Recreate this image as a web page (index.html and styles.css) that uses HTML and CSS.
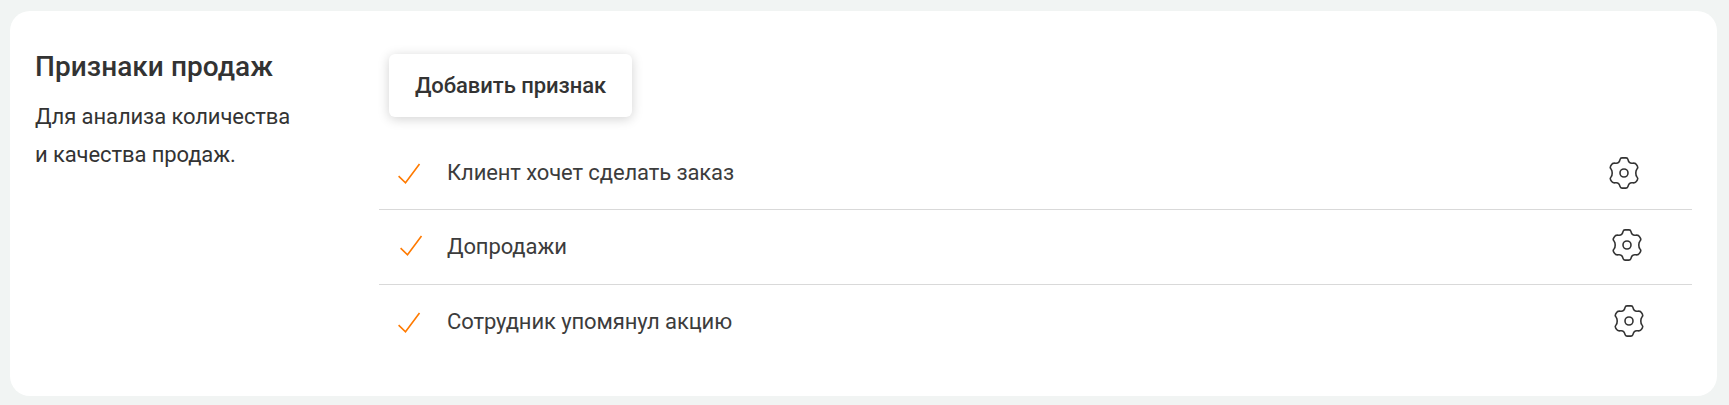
FILE: index.html
```
<!DOCTYPE html>
<html lang="ru">
<head>
    <meta charset="UTF-8">
    <title>Признаки продаж</title>
    <link rel="stylesheet" href="styles.css">
</head>
<body>
    <svg width="0" height="0" class="sprite">
        <symbol id="icon-check" viewBox="0 0 24 24">
            <path d="M1.6 14.2 L8.5 20.8 L22.5 2" />
        </symbol>
        <symbol id="icon-gear" viewBox="-17 -17 34 34">
            <path d="M-2 -15.1 H2 Q3.6 -15.1 4 -13.4 C4.6 -10.8 6 -9.4 8.6 -9.8 Q11.4 -10.4 12.6 -8.2 L13.4 -6.8 Q14.3 -5.2 13 -4 C11.4 -2.2 11.4 2.2 13 4 Q14.3 5.2 13.4 6.8 L12.6 8.2 Q11.4 10.4 8.6 9.8 C6 9.4 4.6 10.8 4 13.4 Q3.6 15.1 2 15.1 H-2 Q-3.6 15.1 -4 13.4 C-4.6 10.8 -6 9.4 -8.6 9.8 Q-11.4 10.4 -12.6 8.2 L-13.4 6.8 Q-14.3 5.2 -13 4 C-11.4 2.2 -11.4 -2.2 -13 -4 Q-14.3 -5.2 -13.4 -6.8 L-12.6 -8.2 Q-11.4 -10.4 -8.6 -9.8 C-6 -9.4 -4.6 -10.8 -4 -13.4 Q-3.6 -15.1 -2 -15.1 Z" />
            <circle cx="0" cy="0" r="4" />
        </symbol>
    </svg>

    <section class="card">
        <div class="card-info">
            <h2 class="card-title">Признаки продаж</h2>
            <p class="card-text">Для анализа количества<br>и качества продаж.</p>
        </div>

        <div class="card-content">
            <button type="button" class="add-btn">Добавить признак</button>

            <ul class="sign-list">
                <li class="sign-item">
                    <svg class="check"><use href="#icon-check" /></svg>
                    <span class="sign-name">Клиент хочет сделать заказ</span>
                    <svg class="gear"><use href="#icon-gear" /></svg>
                </li>
                <li class="sign-item sign-item-middle">
                    <svg class="check"><use href="#icon-check" /></svg>
                    <span class="sign-name">Допродажи</span>
                    <svg class="gear"><use href="#icon-gear" /></svg>
                </li>
                <li class="sign-item sign-item-last">
                    <svg class="check"><use href="#icon-check" /></svg>
                    <span class="sign-name">Сотрудник упомянул акцию</span>
                    <svg class="gear"><use href="#icon-gear" /></svg>
                </li>
            </ul>
        </div>
    </section>
</body>
</html>
```

FILE: styles.css
```
* {
    box-sizing: border-box;
}

body {
    margin: 0;
    padding: 11px 12px 9px 10px;
    background-color: #f1f4f3;
    font-family: Roboto, "Liberation Sans", sans-serif;
    color: #333;
}

.sprite {
    display: none;
}

.card {
    display: flex;
    height: 385px;
    padding: 0 25px;
    background-color: #fff;
    border-radius: 20px;
}

.card-info {
    width: 344px;
    padding-top: 36px;
}

.card-title {
    margin: 0;
    font-size: 28px;
    font-weight: 500;
    line-height: 40px;
    letter-spacing: 0.05px;
}

.card-text {
    margin: 11px 0 0;
    font-size: 22px;
    line-height: 38px;
    letter-spacing: -0.1px;
}

.card-content {
    flex: 1;
    padding-top: 43px;
}

.add-btn {
    display: block;
    width: 243px;
    height: 63px;
    margin-left: 10px;
    padding: 0;
    border: none;
    border-radius: 6px;
    background-color: #fff;
    box-shadow: 0 2px 12px rgba(0, 0, 0, 0.18);
    color: #333;
    font-family: inherit;
    font-size: 22px;
    font-weight: 500;
    letter-spacing: -0.06px;
    cursor: pointer;
}

/* List of signs */
.sign-list {
    margin: 18px 0 0;
    padding: 0;
    list-style: none;
}

.sign-item {
    display: flex;
    align-items: center;
    height: 75px;
    padding: 0 51px 0 18px;
    border-bottom: 1px solid #d9d9d9;
    color: #3c3c3c;
    font-size: 22px;
    letter-spacing: -0.11px;
}

.sign-item-middle {
    padding: 0 48px 2px 20px;
}

.sign-item-last {
    padding: 0 46px 3px 18px;
    border-bottom: none;
}

.sign-name {
    flex: 1;
    margin-left: 26px;
}

.sign-item-middle .sign-name {
    margin-left: 24px;
}

.check {
    width: 24px;
    height: 24px;
    margin-top: 3px;
    fill: none;
    stroke: #ff7a00;
    stroke-width: 1.6;
}

.sign-item-middle .check {
    margin-top: 0;
}

.gear {
    width: 34px;
    height: 34px;
    margin-top: 2px;
    fill: none;
    stroke: #333;
    stroke-width: 1.6;
}

.sign-item-middle .gear {
    margin: 0 0 2px;
}

.sign-item-last .gear {
    margin-top: 0;
}
```
